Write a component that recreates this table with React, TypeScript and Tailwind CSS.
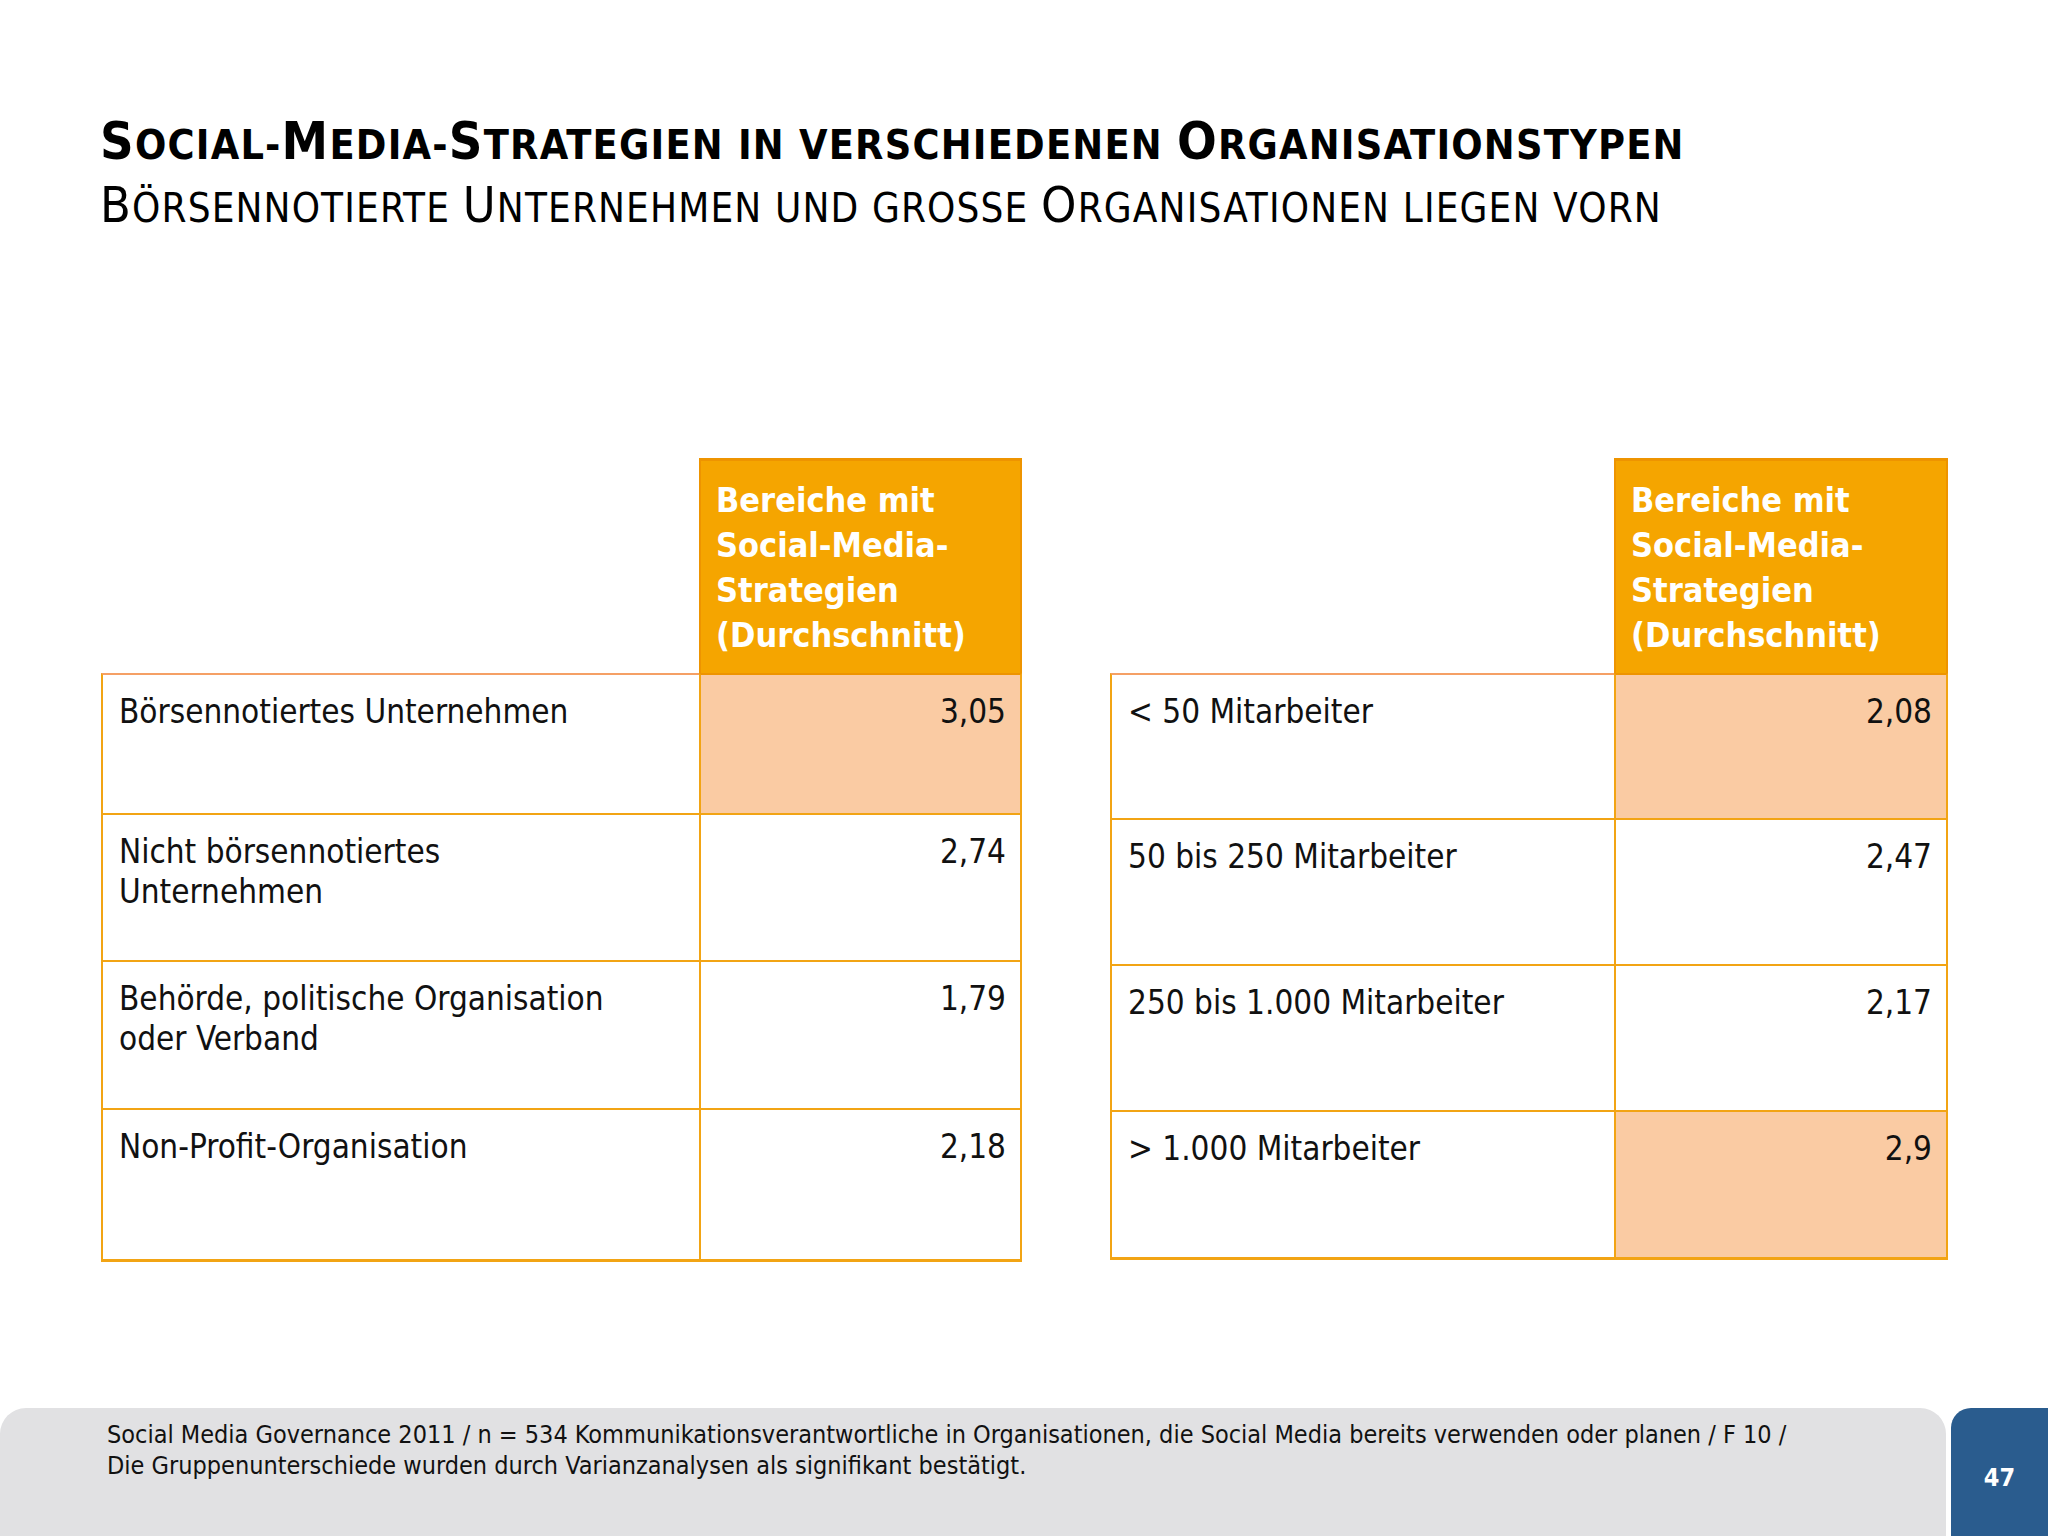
import React from "react";

type Row = { label: string[]; value: string; hi?: boolean; h: string };

const leftRows: Row[] = [
  { label: ["Börsennotiertes Unternehmen"], value: "3,05", hi: true, h: "h-[142px]" },
  { label: ["Nicht börsennotiertes", "Unternehmen"], value: "2,74", h: "h-[147px]" },
  { label: ["Behörde, politische Organisation", "oder Verband"], value: "1,79", h: "h-[148px]" },
  { label: ["Non-Profit-Organisation"], value: "2,18", h: "h-[152px]" },
];

const rightRows: Row[] = [
  { label: ["< 50 Mitarbeiter"], value: "2,08", hi: true, h: "h-[147px]" },
  { label: ["50 bis 250 Mitarbeiter"], value: "2,47", h: "h-[146px]" },
  { label: ["250 bis 1.000 Mitarbeiter"], value: "2,17", h: "h-[146px]" },
  { label: ["> 1.000 Mitarbeiter"], value: "2,9", hi: true, h: "h-[148px]" },
];

// capitals stay big, lowercase letters become small capitals
function SmallCaps({ text, big, small }: { text: string; big: string; small: string }) {
  const parts = text.match(/[A-ZÄÖÜ]+|[^A-ZÄÖÜ]+/g) || [];
  return (
    <>
      {parts.map((p, i) =>
        /[A-ZÄÖÜ]/.test(p[0]) ? (
          <span key={i} className={big + " leading-none"}>{p}</span>
        ) : (
          <span key={i} className={small + " leading-none uppercase"}>{p}</span>
        )
      )}
    </>
  );
}

function DataTable({ rows, labelW, valueW }: { rows: Row[]; labelW: string; valueW: string }) {
  return (
    <div className="flex flex-col">
      <div className="flex">
        <div className={labelW} />
        <div className={valueW + " h-[215px] bg-[#F5A500] border-t-[3px] border-x-2 border-[#EE9400] px-[15px] pt-[17px] text-white font-bold text-[34px] leading-[45px] whitespace-nowrap"}>
          <div>Bereiche mit</div>
          <div>Social-Media-</div>
          <div>Strategien</div>
          <div>(Durchschnitt)</div>
        </div>
      </div>
      {rows.map((r, i) => (
        <div key={i} className={"flex " + r.h}>
          <div
            className={
              labelW +
              " border-l-2 border-[#F2A414] px-[16px] pt-[17px] text-[33px] leading-[40px] text-[#111] " +
              (i === 0 ? "border-t-2 border-t-[#F5A065] " : "") +
              (i === rows.length - 1 ? "border-b-[3px]" : "border-b-2")
            }
          >
            {r.label.map((l, j) => (
              <div key={j} className="whitespace-nowrap">{l}</div>
            ))}
          </div>
          <div
            className={
              valueW +
              " border-x-2 border-[#F2A414] px-[14px] pt-[17px] text-right text-[33px] leading-[40px] text-[#111] " +
              (r.hi ? "bg-[#FACBA3] " : "bg-white ") +
              (i === 0 ? "border-t-2 border-t-[#EE9400] " : "") +
              (i === rows.length - 1 ? "border-b-[3px]" : "border-b-2")
            }
          >
            {r.value}
          </div>
        </div>
      ))}
    </div>
  );
}

export default function App() {
  return (
    <div className="w-[2048px] h-[1536px] bg-white flex flex-col font-['DejaVu_Sans_Condensed','DejaVu_Sans',sans-serif] [font-stretch:condensed] text-black overflow-hidden">
      {/* TITLE */}
      <div className="pl-[100px] pt-[109px]">
        <div className="h-[64px] text-[52px] leading-[64px] font-bold whitespace-nowrap tracking-[1.2px]">
          <SmallCaps text="Social-Media-Strategien in verschiedenen Organisationstypen" big="text-[52px]" small="text-[41px]" />
        </div>
        <div className="h-[64px] text-[50px] leading-[64px] whitespace-nowrap tracking-[1.15px]">
          <SmallCaps text="Börsennotierte Unternehmen und grosse Organisationen liegen vorn" big="text-[50px]" small="text-[40px]" />
        </div>
      </div>

      {/* TABLES */}
      <div className="flex pl-[101px] gap-[88px] mt-[221px]">
        <DataTable rows={leftRows} labelW="w-[598px]" valueW="w-[323px]" />
        <DataTable rows={rightRows} labelW="w-[504px]" valueW="w-[334px]" />
      </div>

      {/* FOOTER */}
      <div className="mt-auto flex gap-[5px] h-[128px]">
        <div className="flex-1 bg-[#E1E1E3] rounded-t-[26px] pl-[107px] pt-[11px] text-[25px] leading-[31px] text-[#111]">
          <div className="whitespace-nowrap">
            Social Media Governance 2011 / n = 534 Kommunikationsverantwortliche in Organisationen, die Social Media bereits verwenden oder planen / F 10 /
          </div>
          <div className="whitespace-nowrap">Die Gruppenunterschiede wurden durch Varianzanalysen als signifikant bestätigt.</div>
        </div>
        <div className="w-[97px] bg-[#2A5C8E] rounded-tl-[20px] flex justify-center pt-[55px] text-white font-bold text-[25px] leading-[30px]">
          47
        </div>
      </div>
    </div>
  );
}
